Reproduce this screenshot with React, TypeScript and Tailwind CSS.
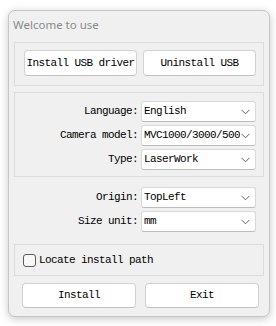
import { ReactNode } from 'react'

const mono = 'font-["Liberation_Mono","DejaVu_Sans_Mono",monospace] text-[11px] tracking-[-0.6px] text-black'

function Chevron() {
  return (
    <svg width="9" height="6" viewBox="0 0 9 6" className="shrink-0">
      <polyline points="0.5,0.8 4.5,4.8 8.5,0.8" fill="none" stroke="#606060" strokeWidth="1" />
    </svg>
  )
}

function Button({ label, width }: { label: string; width: string }) {
  return (
    <div
      className={`${width} flex items-center justify-center rounded-[4px] border border-[#d2d2d2] border-b-[#c2c2c2] bg-white ${mono}`}
    >
      {label}
    </div>
  )
}

function Select({ value }: { value: string }) {
  return (
    <div className="flex h-[21px] w-[115px] items-center rounded-[3px] border border-[#d8d8d8] border-b-[#bcbcbc] bg-white pl-[2px] pr-[5px]">
      <span className={`w-[96px] overflow-hidden whitespace-nowrap ${mono}`}>{value}</span>
      <span className="ml-auto">
        <Chevron />
      </span>
    </div>
  )
}

function Row({ label, value }: { label: string; value: string }) {
  return (
    <div className="flex items-center gap-[3px]">
      <span className={`w-[123px] text-right ${mono}`}>{label}</span>
      <Select value={value} />
    </div>
  )
}

function Group({ children, className }: { children: ReactNode; className: string }) {
  return <div className={`border border-[#dcdcdc] ${className}`}>{children}</div>
}

export default function App() {
  return (
    <div className="min-h-screen bg-white pl-[8px] pt-[10px]">
      <div className="flex h-[307px] w-[262px] flex-col rounded-[7px] border border-[#c6c6c6] bg-[#f0f0f0] shadow-[0_2px_8px_rgba(0,0,0,0.22)]">
        <div className='h-[31px] pl-[4px] pt-[6px] font-["Noto_Sans",sans-serif] text-[11.5px] leading-[16px] text-[#8a8a8a]'>
          Welcome to use
        </div>

        <div className="flex flex-col px-[5px]">
          <Group className="flex h-[44px] gap-[6px] pl-[9px] pt-[7px]">
            <Button label="Install USB driver" width="h-[26px] w-[113px]" />
            <Button label="Uninstall USB" width="h-[26px] w-[113px]" />
          </Group>

          <Group className="mt-[6px] flex flex-col gap-[3px] pb-[6px] pt-[8px]">
            <Row label="Language:" value="English" />
            <Row label="Camera model:" value="MVC1000/3000/5000" />
            <Row label="Type:" value="LaserWork" />
          </Group>

          <div className="mt-[10px] flex flex-col gap-[3px] pl-[1px]">
            <Row label="Origin:" value="TopLeft" />
            <Row label="Size unit:" value="mm" />
          </div>

          <Group className="mt-[12px] flex h-[32px] items-center gap-[3px] pl-[8px]">
            <div className="h-[13px] w-[13px] rounded-[3px] border border-[#5c5c5c] bg-[#f7f7f7]" />
            <span className={mono}>Locate install path</span>
          </Group>

          <div className="mt-[7px] flex gap-[9px] pl-[8px]">
            <Button label="Install" width="h-[25px] w-[114px]" />
            <Button label="Exit" width="h-[25px] w-[114px]" />
          </div>
        </div>
      </div>
    </div>
  )
}
